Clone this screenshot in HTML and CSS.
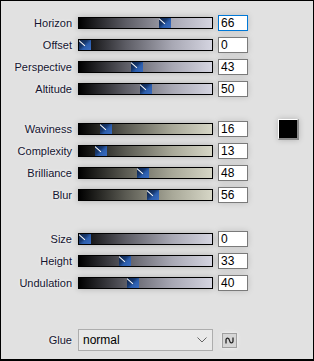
FILE: index.html
```html
<!DOCTYPE html>
<html>
<head>
  <title>Terrain Settings</title>
  <link rel="stylesheet" href="styles.css">
</head>
<body>
  <div class="panel">
    <div class="group cool">
      <div class="row">
        <div class="label">Horizon</div>
        <div class="track"><div class="thumb" style="left: 80px"></div></div>
        <div class="value focused">66</div>
      </div>
      <div class="row">
        <div class="label">Offset</div>
        <div class="track"><div class="thumb" style="left: 0px"></div></div>
        <div class="value">0</div>
      </div>
      <div class="row">
        <div class="label">Perspective</div>
        <div class="track"><div class="thumb" style="left: 52px"></div></div>
        <div class="value">43</div>
      </div>
      <div class="row">
        <div class="label">Altitude</div>
        <div class="track"><div class="thumb" style="left: 61px"></div></div>
        <div class="value">50</div>
      </div>
    </div>

    <div class="group warm">
      <div class="row">
        <div class="label">Waviness</div>
        <div class="track"><div class="thumb" style="left: 21px"></div></div>
        <div class="value">16</div>
        <div class="swatch"></div>
      </div>
      <div class="row">
        <div class="label">Complexity</div>
        <div class="track"><div class="thumb" style="left: 16px"></div></div>
        <div class="value">13</div>
      </div>
      <div class="row">
        <div class="label">Brilliance</div>
        <div class="track"><div class="thumb" style="left: 58px"></div></div>
        <div class="value">48</div>
      </div>
      <div class="row">
        <div class="label">Blur</div>
        <div class="track"><div class="thumb" style="left: 68px"></div></div>
        <div class="value">56</div>
      </div>
    </div>

    <div class="group cool">
      <div class="row">
        <div class="label">Size</div>
        <div class="track"><div class="thumb" style="left: 0px"></div></div>
        <div class="value">0</div>
      </div>
      <div class="row">
        <div class="label">Height</div>
        <div class="track"><div class="thumb" style="left: 40px"></div></div>
        <div class="value">33</div>
      </div>
      <div class="row">
        <div class="label">Undulation</div>
        <div class="track"><div class="thumb" style="left: 48px"></div></div>
        <div class="value">40</div>
      </div>
    </div>

    <div class="row glue-row">
      <div class="label">Glue</div>
      <div class="select">
        <span>normal</span>
        <svg class="chevron" width="10" height="6" viewBox="0 0 10 6">
          <path d="M0.5 0.5 L5 5 L9.5 0.5" fill="none" stroke="#666" stroke-width="1"/>
        </svg>
      </div>
      <div class="small-button">
        <svg width="9" height="7" viewBox="0 0 9 7">
          <path d="M1 6.5 L1 3 C1 0.5 4 0.5 4.5 3.5 C5 6.5 8 6.5 8 4 L8 0.5" fill="none" stroke="#222" stroke-width="1.3"/>
        </svg>
      </div>
    </div>
  </div>
</body>
</html>
```

FILE: styles.css
```css
body {
  margin: 0;
  font-family: "Liberation Sans", Arial, sans-serif;
}

.panel {
  width: 314px;
  height: 361px;
  box-sizing: border-box;
  border: 1px solid #000;
  border-bottom-width: 2px;
  background-color: #e1e1e1;
  padding-top: 11px;
}

.group {
  display: flex;
  flex-direction: column;
  margin-bottom: 18px;
}

.group.warm {
  margin-bottom: 22px;
}

.row {
  display: flex;
  align-items: center;
  height: 22px;
}

.label {
  width: 71px;
  text-align: right;
  font-size: 11px;
  color: #141430;
  text-shadow: 0 0 3px #fff;
}

.track {
  position: relative;
  width: 133px;
  height: 10px;
  margin-left: 6px;
  border: 1px solid #000;
  box-shadow: 0 0 6px rgba(0, 0, 0, 0.22);
}

.cool .track {
  background: linear-gradient(to right, #000 0%, #5c5c64 35%, #a8a8b4 70%, #d4d4e0 100%);
}

.warm .track {
  background: linear-gradient(to right, #000 0%, #5a5a52 35%, #a8a898 70%, #d6d6c6 100%);
}

.thumb {
  position: absolute;
  top: 0;
  width: 12px;
  height: 10px;
  background: linear-gradient(135deg, #0e2346 0%, #17386e 40%, #2c5ead 60%, #3a6cc0 100%);
  overflow: hidden;
}

.thumb::before {
  content: "";
  position: absolute;
  left: 0;
  top: 0;
  width: 8px;
  height: 1px;
  background-color: #fff;
  transform: rotate(42deg);
  transform-origin: left center;
}

.value {
  width: 26px;
  height: 14px;
  margin-left: 5px;
  border: 1px solid #7a7a7a;
  background-color: #fff;
  font-size: 12px;
  line-height: 14px;
  padding-left: 2px;
  box-sizing: content-box;
  color: #000;
  box-shadow: 0 0 6px rgba(0, 0, 0, 0.15);
}

.value.focused {
  border-color: #0078d7;
}

.swatch {
  width: 18px;
  height: 18px;
  margin-left: 30px;
  background-color: #000;
  border-top: 1px solid #fff;
  border-left: 1px solid #fff;
  border-right: 2px solid #8a8a8a;
  border-bottom: 2px solid #8a8a8a;
  box-shadow: 0 0 6px rgba(0, 0, 0, 0.2);
}

.glue-row {
  margin-top: 35px;
  height: 22px;
}

.select {
  display: flex;
  align-items: center;
  justify-content: space-between;
  width: 124px;
  height: 20px;
  margin-left: 6px;
  border: 1px solid #adadad;
  background-color: #e9e9e9;
  font-size: 12px;
  color: #000;
  padding: 0 5px 0 4px;
  box-sizing: content-box;
}

.chevron {
  display: block;
}

.small-button {
  display: flex;
  align-items: center;
  justify-content: center;
  width: 13px;
  height: 13px;
  margin-left: 9px;
  border: 1px solid #a0a0a0;
  background-color: #d6d6d6;
  box-shadow: 0 0 4px rgba(255, 255, 255, 0.8);
}
```
